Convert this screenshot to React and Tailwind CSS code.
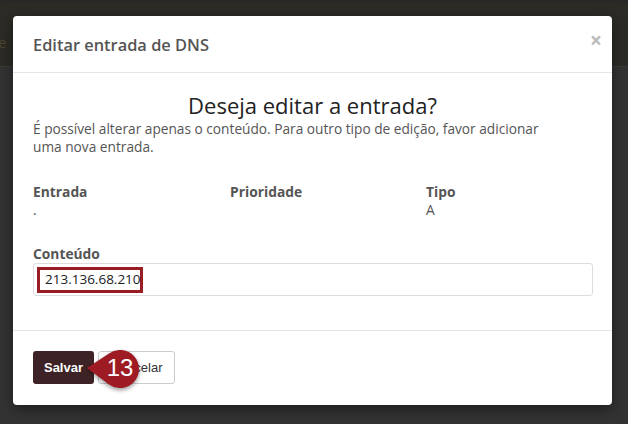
export default function App() {
  return (
    <div className="relative w-[628px] h-[424px] overflow-hidden bg-[#333333] font-['Open_Sans',sans-serif]">
      {/* faded page behind the overlay */}
      <div className="absolute inset-0 flex flex-col">
        <div className="h-[3px] bg-[#282828]" />
        <div className="h-[64px] bg-[#2c2b25] border-b border-[#3a3a36] text-[#4a4730] text-[15px] pt-[28px] -ml-[2px]">e</div>
        <div className="flex-1 bg-[#333333]" />
      </div>

      <div className="relative pt-[16px] pl-[13px]">
        <div className="w-[599px] h-[389px] bg-white rounded-[4px] shadow-[0_4px_14px_rgba(0,0,0,0.45)] flex flex-col">
          <div className="h-[57px] border-b border-[#e5e5e5] flex items-center justify-between px-[20px] pt-[2px]">
            <h4 className="text-[16.4px] font-semibold text-[#555555]">Editar entrada de DNS</h4>
            <span className="text-[#bbbbbb] text-[21px] font-bold leading-none -mt-[9px] -mr-[10px]">×</span>
          </div>

          <div className="h-[258px] border-b border-[#e5e5e5] px-[20px] pt-[17px]">
            <h3 className="text-center text-[22px] leading-[30px] text-[#222222]">Deseja editar a entrada?</h3>
            <p className="max-w-[530px] text-[13.7px] leading-[18px] text-[#555555]">
              É possível alterar apenas o conteúdo. Para outro tipo de edição, favor adicionar uma nova entrada.
            </p>

            <div className="grid grid-cols-[197px_196px_1fr] mt-[27px] text-[13.8px] leading-[18px] text-[#555555]">
              <div>
                <div className="font-bold">Entrada</div>
                <div className="font-normal">.</div>
              </div>
              <div>
                <div className="font-bold">Prioridade</div>
              </div>
              <div>
                <div className="font-bold">Tipo</div>
                <div>A</div>
              </div>
            </div>

            <div className="mt-[26px] text-[13.8px] leading-[18px] font-bold text-[#555555]">Conteúdo</div>
            <div className="w-[560px] h-[33px] border border-[#dddddd] rounded-[3px] flex items-center pl-[3px]">
              <div className="h-[26px] w-[106px] border-[3px] border-[#9b1c25] flex items-center pl-[5px] text-[13.5px] text-[#222222]">
                213.136.68.210
              </div>
            </div>
          </div>

          <div className="px-[20px] pt-[20px] flex gap-[4px] font-['Liberation_Sans',Arial,sans-serif] text-[13px]">
            <button className="h-[33px] w-[61px] bg-[#3e2326] text-white font-bold rounded-[3px]">Salvar</button>
            <div className="relative">
              <button className="h-[33px] w-[77px] bg-white border border-[#cccccc] text-[#333333] rounded-[3px]">Cancelar</button>
              <svg width="60" height="46" viewBox="0 0 60 46" className="absolute left-[-14px] top-[-4px] drop-shadow-[0_2px_2px_rgba(0,0,0,0.4)]">
                <path d="M3 21 L25 6.5 A19 19 0 1 1 25 37.5 Z" fill="#9e1b24" />
              </svg>
              <span className="absolute left-[6px] top-[2px] w-[32px] text-center text-white text-[24px] leading-[30px] font-normal">13</span>
            </div>
          </div>
        </div>
      </div>
    </div>
  );
}
